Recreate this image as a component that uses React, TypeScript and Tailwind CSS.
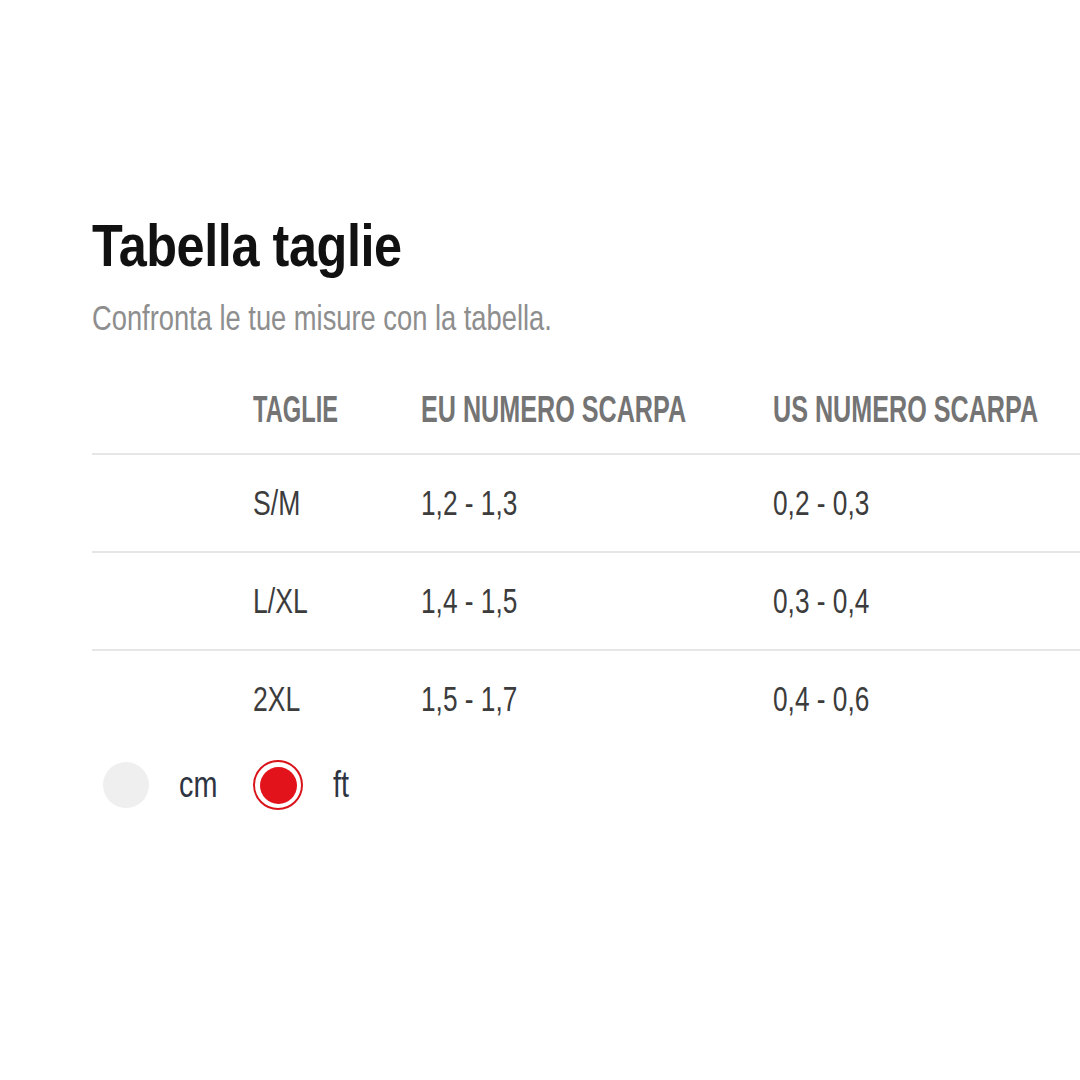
const rows = [
  { size: "S/M", eu: "1,2 - 1,3", us: "0,2 - 0,3" },
  { size: "L/XL", eu: "1,4 - 1,5", us: "0,3 - 0,4" },
  { size: "2XL", eu: "1,5 - 1,7", us: "0,4 - 0,6" },
]

const font = { fontFamily: '"Liberation Sans", Arial, sans-serif' }

// condensed look: the reference uses a narrow display face, so squeeze horizontally
function Narrow({ children, className = "" }: { children: React.ReactNode; className?: string }) {
  return <span className={"inline-block origin-left whitespace-nowrap " + className}>{children}</span>
}

export default function App() {
  return (
    <div className="w-[1080px] h-[1080px] overflow-hidden bg-white pl-[92px] pt-[216px]" style={font}>
      <h1 className="text-[60px] leading-[60px] font-bold text-[#111]">
        <Narrow className="scale-x-[0.84] tracking-[-0.5px]">Tabella taglie</Narrow>
      </h1>
      <p className="mt-[22px] text-[35px] leading-[40px] text-[#8e8e8e]">
        <Narrow className="scale-x-[0.78]">Confronta le tue misure con la tabella.</Narrow>
      </p>

      <div className="mt-[29px] w-[1000px]">
        <div className="grid h-[88px] grid-cols-[161px_168px_352px_1fr] items-center border-b-2 border-[#e6e6e6] text-[37px] leading-[40px] font-bold text-[#747474]">
          <div />
          <div><Narrow className="scale-x-[0.64]">TAGLIE</Narrow></div>
          <div><Narrow className="scale-x-[0.68]">EU NUMERO SCARPA</Narrow></div>
          <div><Narrow className="scale-x-[0.68]">US NUMERO SCARPA</Narrow></div>
        </div>
        {rows.map((r, i) => (
          <div
            key={r.size}
            className={
              "grid grid-cols-[161px_168px_352px_1fr] items-center text-[35px] leading-[40px] text-[#3c3c3c] " +
              (i < rows.length - 1 ? "h-[98px] border-b-2 border-[#e6e6e6]" : "h-[96px]")
            }
          >
            <div />
            <div><Narrow className="scale-x-[0.76]">{r.size}</Narrow></div>
            <div><Narrow className="scale-x-[0.75]">{r.eu}</Narrow></div>
            <div><Narrow className="scale-x-[0.75]">{r.us}</Narrow></div>
          </div>
        ))}
      </div>

      <div className="flex h-[76px] items-center text-[36px] leading-[40px] text-[#2e3442]">
        <span className="ml-[11px] h-[46px] w-[46px] shrink-0 rounded-full bg-[#efefef]" />
        <span className="ml-[30px] w-[44px] shrink-0">
          <Narrow className="scale-x-[0.8]">cm</Narrow>
        </span>
        <span className="ml-[30px] flex h-[50px] w-[50px] shrink-0 items-center justify-center rounded-full border-2 border-[#d9141b] bg-white">
          <span className="h-[37px] w-[37px] rounded-full bg-[#e3131b]" />
        </span>
        <span className="ml-[30px]">
          <Narrow className="scale-x-[0.8]">ft</Narrow>
        </span>
      </div>
    </div>
  )
}
